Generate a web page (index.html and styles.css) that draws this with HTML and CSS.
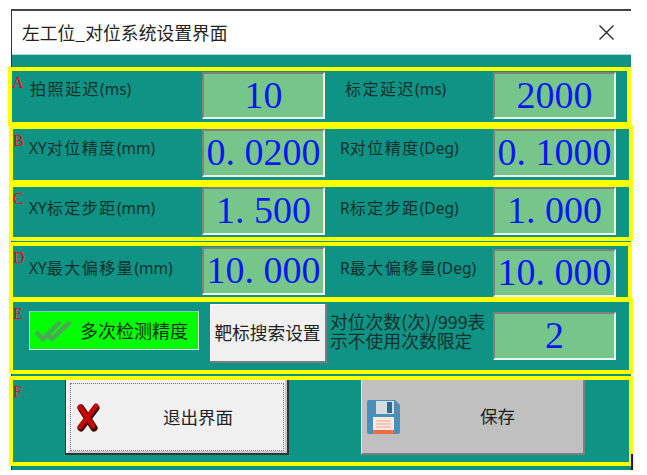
FILE: index.html
```html
<!DOCTYPE html>
<html lang="zh-CN">
<head>
<meta charset="utf-8">
<title>左工位_对位系统设置界面</title>
<link rel="stylesheet" href="styles.css">
</head>
<body>
<div class="window">
  <header class="titlebar">
    <span class="title">左工位_对位系统设置界面</span>
    <svg class="close" viewBox="0 0 15 15" width="15" height="15"><path d="M.5 .5L14.5 14.5M14.5 .5L.5 14.5"/></svg>
  </header>
  <main class="panel">
    <section class="row row-a">
      <span class="tag">A</span>
      <span class="label first"><span class="cn">拍照延迟</span>(ms)</span>
      <div class="field">10</div>
      <span class="label second"><span class="cn">标定延迟</span>(ms)</span>
      <div class="field">2000</div>
    </section>
    <section class="row row-b">
      <span class="tag">B</span>
      <span class="label first">XY<span class="cn">对位精度</span>(mm)</span>
      <div class="field">0<span class="dot">.</span>0200</div>
      <span class="label second">R<span class="cn">对位精度</span>(Deg)</span>
      <div class="field">0<span class="dot">.</span>1000</div>
    </section>
    <section class="row row-c">
      <span class="tag">C</span>
      <span class="label first">XY<span class="cn">标定步距</span>(mm)</span>
      <div class="field">1<span class="dot">.</span>500</div>
      <span class="label second">R<span class="cn">标定步距</span>(Deg)</span>
      <div class="field">1<span class="dot">.</span>000</div>
    </section>
    <section class="row row-d">
      <span class="tag">D</span>
      <span class="label first">XY<span class="cn">最大偏移量</span>(mm)</span>
      <div class="field">10<span class="dot">.</span>000</div>
      <span class="label second">R<span class="cn">最大偏移量</span>(Deg)</span>
      <div class="field field-low">10<span class="dot">.</span>000</div>
    </section>
    <section class="row row-e">
      <span class="tag">E</span>
      <div class="check">
        <svg class="check-icon" viewBox="0 0 38 22" width="38" height="22"><path d="M2 12L9 19L26 2"/><path d="M12 13L18 19L36 2"/></svg>
        <span class="check-text">多次检测精度</span>
      </div>
      <button class="search-btn">靶标搜索设置</button>
      <p class="note">对位次数(次)/999表<br>示不使用次数限定</p>
      <div class="field field-count">2</div>
    </section>
    <section class="row row-f">
      <span class="tag">F</span>
      <button class="action exit">
        <span class="focus">
          <svg class="x-icon" viewBox="0 0 24 29" width="24" height="29">
            <path class="x-shadow" d="M5 5L18 25M20 5L5 25"/>
            <path class="x-fill" d="M4 4L17 23M20 3L4 24"/>
          </svg>
          <span class="exit-text">退出界面</span>
        </span>
      </button>
      <button class="action save">
        <svg class="disk" viewBox="0 0 34 34" width="34" height="34">
          <path d="M1 2Q1 0 3 0H29L34 5V32Q34 34 32 34H3Q1 34 1 32Z" fill="#4a8fb9"/>
          <rect x="10" y="1" width="18" height="13" fill="#d9dcdc"/>
          <rect x="21" y="2" width="5" height="11" fill="#2d6d92"/>
          <rect x="7" y="17" width="21" height="17" fill="#f9e9e2"/>
          <path d="M10 21H25M10 24H25M10 27H25" stroke="#eda48c" stroke-width="1"/>
          <rect x="7" y="30" width="21" height="4" fill="#ea6f45"/>
        </svg>
        <span class="save-text">保存</span>
      </button>
    </section>
    <div class="edge"></div>
  </main>
</div>
</body>
</html>
```
FILE: styles.css
```css
* { box-sizing: border-box; }
html, body { margin: 0; padding: 0; background: #fff; overflow: hidden; }
body { font-family: "Noto Sans", "Noto Sans CJK SC", sans-serif; color: #1a2a28; }

.window {
  width: 620px;
  height: 461px;
  margin: 9px 0 0 11px;
  border-top: 2px solid #444;
  border-left: 1px solid #333;
  display: flex;
  flex-direction: column;
}

.titlebar {
  height: 44px;
  flex: none;
  background: #fff;
  border-bottom: 1px solid #bcd8d5;
  padding: 0 17px 0 10px;
  display: flex;
  align-items: center;
  justify-content: space-between;
}
.title { font-size: 17.8px; color: #222; font-family: "Noto Sans CJK SC", sans-serif; padding-bottom: 2px; }
.close { fill: none; stroke: #222; stroke-width: 1.3; }

.panel {
  flex: 1;
  background: #0e9385;
  padding-top: 12px;
  position: relative;
}

.row {
  border: 4px solid #ffff00;
  margin-left: -3px;
  width: 624px;
  display: flex;
  align-items: flex-start;
}
.row-a { margin-left: -4px; width: 623px; height: 59px; }
.row-b { margin-top: -1px; height: 59px; --label-top: 8px; }
.row-c { margin-top: -1px; height: 58px; --label-top: 10px; }
.row-d { margin-top: 1px; width: 623px; height: 59px; --label-top: 11px; }
.row-e { margin-top: -3px; height: 76px; }
.row-f { margin-top: 2px; height: 90px; }

.tag {
  flex: none;
  width: 16px;
  margin-top: 4px;
  color: #ff0000;
  font: 16px/16px "Liberation Serif", serif;
}
.row-a .tag { width: 18px; }

.label {
  flex: none;
  font-size: 15.5px;
  line-height: 20px;
  padding-top: var(--label-top, 7px);
  white-space: nowrap;
  color: #12302d;
}
.cn { letter-spacing: 1.5px; font-family: "Noto Sans CJK SC", sans-serif; font-size: 16px; }
.label.first { width: 173px; }
.label.second { width: 153px; margin-left: 15px; }
.row-a .label.first { width: 172px; }
.row-a .label.second { width: 148px; margin-left: 20px; }

.field {
  flex: none;
  width: 123px;
  height: 48px;
  background: #76c68c;
  border: 2px solid;
  border-color: #808080 #eef3ee #eef3ee #808080;
  color: #0a18f0;
  font: 38px/42px "Liberation Serif", serif;
  text-align: center;
  white-space: nowrap;
}
.row-a .field { height: 47px; margin-top: 1px; }
.row-d .field { margin-top: 1px; }
.row-d .field-low { margin-top: 3px; }
.field-count { margin-top: 10px; }
.dot { display: inline-block; width: 0.5em; text-align: left; }

.check {
  flex: none;
  width: 170px;
  height: 39px;
  margin-top: 9px;
  background: #00ff00;
  border: 1px solid;
  border-color: #8fc9a8 #d8efe0 #e8f4ec #d8efe0;
  display: flex;
  align-items: center;
  padding-left: 4px;
}
.check-icon { flex: none; fill: none; stroke: #48aa55; stroke-width: 4.5; }
.check-text {
  margin-left: 8px;
  padding-bottom: 2px;
  font: 18px "Noto Sans CJK SC", sans-serif;
  color: #0a2a10;
  white-space: nowrap;
}

.search-btn {
  flex: none;
  width: 117px;
  height: 59px;
  margin: 2px 0 0 11px;
  padding: 0 0 2px;
  background: #f0f0f0;
  border: 0;
  border-right: 2px solid #7d7d7d;
  border-bottom: 2px solid #7d7d7d;
  box-shadow: inset 1px 1px 0 #fff;
  font: 17.7px "Noto Sans CJK SC", sans-serif;
  color: #222;
  white-space: nowrap;
}

.note {
  flex: none;
  width: 163px;
  margin: 10px 0 0 3px;
  font: 17.8px/19px "Noto Sans CJK SC", sans-serif;
  color: #12302d;
  white-space: nowrap;
}

.action {
  flex: none;
  width: 224px;
  height: 75px;
  padding: 0;
  font: 17.5px "Noto Sans CJK SC", sans-serif;
  color: #222;
}
.exit {
  margin-left: 36px;
  background: #f0f0f0;
  border: 0;
  border-left: 1px solid #333;
  border-right: 2px solid #333;
  border-bottom: 2px solid #333;
  box-shadow: inset 2px 0 0 #fff, inset -2px -2px 0 #c9c9c9;
  padding: 3px 3px 2px 4px;
}
.focus {
  display: flex;
  align-items: center;
  height: 100%;
  border: 1px dotted #777;
  padding-left: 5px;
}
.x-icon { flex: none; fill: none; stroke-linecap: round; }
.x-shadow { stroke: #3a0505; stroke-width: 7; }
.x-fill { stroke: #c40606; stroke-width: 5; }
.exit-text { margin-left: 63px; padding-bottom: 2px; }

.save {
  margin-left: 72px;
  background: #c0c0c0;
  border: 0;
  border-left: 1px solid #e8f2f0;
  border-right: 2px solid #7e7e7e;
  border-bottom: 2px solid #7e7e7e;
  display: flex;
  align-items: center;
  padding-left: 4px;
}
.disk { flex: none; }
.save-text { margin-left: 80px; padding-bottom: 2px; }

.edge {
  position: absolute;
  left: 619px;
  top: 399px;
  width: 2px;
  height: 13px;
  background: #0000ff;
}
.edge::after {
  content: "";
  position: absolute;
  left: 0;
  top: 13px;
  width: 2px;
  height: 7px;
  background: #000;
}
```
